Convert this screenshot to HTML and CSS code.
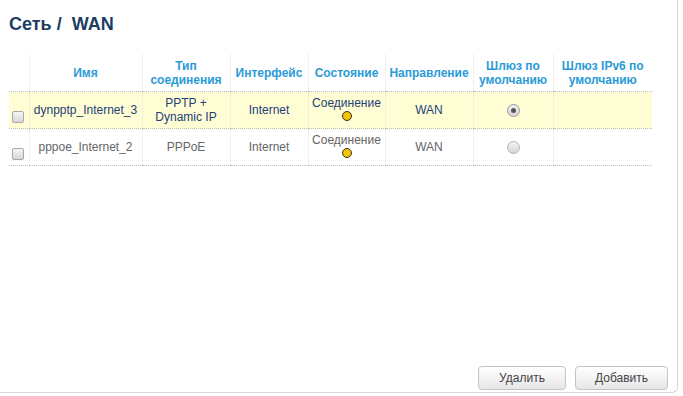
FILE: index.html
```html
<!DOCTYPE html>
<html>
<head>
<meta charset="utf-8"/>
    <title>WAN</title>
    <link rel="stylesheet" href="styles.css">
</head>
<body>
    <div class="panel">
        <h1 class="title">Сеть /&nbsp; WAN</h1>

        <table class="grid">
            <colgroup>
                <col class="c-check"/>
                <col class="c-name"/>
                <col class="c-type"/>
                <col class="c-iface"/>
                <col class="c-state"/>
                <col class="c-dir"/>
                <col class="c-gw"/>
                <col class="c-gw6"/>
            </colgroup>
            <thead>
                <tr>
                    <th></th>
                    <th>Имя</th>
                    <th>Тип<br/>соединения</th>
                    <th>Интерфейс</th>
                    <th>Состояние</th>
                    <th>Направление</th>
                    <th>Шлюз по<br/>умолчанию</th>
                    <th>Шлюз IPv6 по<br/>умолчанию</th>
                </tr>
            </thead>
            <tbody>
                <tr class="active">
                    <td class="check"><input type="checkbox" class="box"/></td>
                    <td>dynpptp_Internet_3</td>
                    <td>PPTP +<br/>Dynamic IP</td>
                    <td>Internet</td>
                    <td><div>Соединение</div><span class="led"></span></td>
                    <td>WAN</td>
                    <td><span class="radio checked"></span></td>
                    <td></td>
                </tr>
                <tr class="plain">
                    <td class="check"><input type="checkbox" class="box"/></td>
                    <td>pppoe_Internet_2</td>
                    <td>PPPoE</td>
                    <td>Internet</td>
                    <td><div>Соединение</div><span class="led"></span></td>
                    <td>WAN</td>
                    <td><span class="radio"></span></td>
                    <td></td>
                </tr>
            </tbody>
        </table>

        <div class="actions">
            <button type="button" class="btn btn-del">Удалить</button>
            <button type="button" class="btn btn-add">Добавить</button>
        </div>
    </div>
</body>
</html>
```

FILE: styles.css
```css
html, body {
    margin: 0;
    padding: 0;
    background: #fff;
}

body {
    font-family: "Liberation Sans", Arial, sans-serif;
    font-size: 12px;
}

.panel {
    width: 677px;
    height: 392px;
    border-right: 1px solid #d6d6d6;
    border-bottom: 1px solid #d6d6d6;
    border-bottom-right-radius: 6px;
    display: flex;
    flex-direction: column;
}

.title {
    margin: 13px 0 0 9px;
    font-size: 18px;
    line-height: 22px;
    font-weight: bold;
    color: #1b3d63;
}

.grid {
    margin: 20px 0 0 9px;
    width: 643px;
    table-layout: fixed;
    border-collapse: collapse;
}

.c-check { width: 20px; }
.c-name { width: 113px; }
.c-type { width: 88px; }
.c-iface { width: 78px; }
.c-state { width: 77px; }
.c-dir { width: 88px; }
.c-gw { width: 80px; }
.c-gw6 { width: 99px; }

.grid th,
.grid td {
    padding: 4px 2px;
    line-height: 14px;
    text-align: center;
    vertical-align: middle;
    border-left: 1px dotted #e2e2e2;
    border-bottom: 1px dotted #bdbdbd;
}

.grid th:first-child,
.grid td:first-child {
    border-left: none;
}

.grid th {
    height: 27px;
    font-weight: bold;
    color: #2a9bd6;
}

.active td {
    background: #fffdd4;
    color: #233f78;
}

.plain td {
    height: 26px;
    color: #666;
}

.grid td.check {
    vertical-align: bottom;
    text-align: left;
    padding: 0 0 5px 3px;
}

.box {
    -webkit-appearance: none;
    appearance: none;
    display: block;
    margin: 0;
    width: 12px;
    height: 12px;
    border: 1px solid #a8a8a8;
    border-radius: 2px;
    background: linear-gradient(#f6f6f6, #d6d6d6);
}

.led {
    display: inline-block;
    width: 8px;
    height: 8px;
    margin-top: 1px;
    border: 1px solid #333;
    border-radius: 50%;
    background: #f5c400;
    vertical-align: top;
}

.radio {
    display: inline-block;
    width: 11px;
    height: 11px;
    border: 1px solid #b4b4b4;
    border-radius: 50%;
    background: linear-gradient(#f4f4f4, #d4d4d4);
    vertical-align: middle;
    position: relative;
}

.radio.checked {
    border-color: #989898;
}

.radio.checked::after {
    content: "";
    position: absolute;
    left: 3px;
    top: 3px;
    width: 5px;
    height: 5px;
    border-radius: 50%;
    background: #555;
}

.actions {
    margin-top: auto;
    display: flex;
    justify-content: flex-end;
    gap: 9px;
    padding: 0 9px 2px 0;
}

.btn {
    height: 24px;
    padding: 0;
    font-family: "Liberation Sans", Arial, sans-serif;
    font-size: 12px;
    color: #444;
    border: 1px solid #c4c4c4;
    border-radius: 4px;
    background: linear-gradient(#ffffff, #e6e6e6);
}

.btn-del { width: 88px; }
.btn-add { width: 93px; }
```
